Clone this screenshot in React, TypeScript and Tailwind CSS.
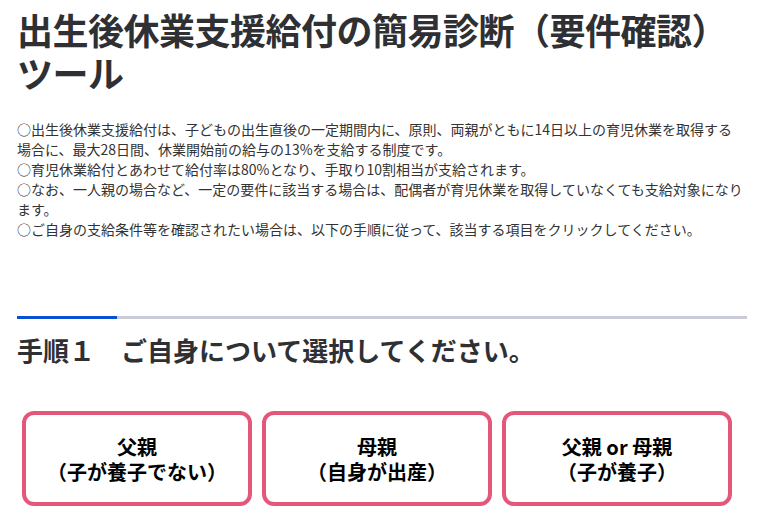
import React from 'react'

const options = [
  { line1: '父親', line2: '（子が養子でない）' },
  { line1: '母親', line2: '（自身が出産）' },
  { line1: '父親 or 母親', line2: '（子が養子）' },
]

export default function App() {
  return (
    <div className="min-h-[530px] bg-white px-[17px] pt-2 text-[#333] font-['Noto_Sans_CJK_JP','Noto_Sans',sans-serif]">
      <h1 className="text-[36px] font-bold leading-[1.2] tracking-[-0.5px] text-[#2f3033]">
        出生後休業支援給付の簡易診断（要件確認）ツール
      </h1>

      <p className="mt-[25px] w-[730px] text-[14px] leading-[20px] text-[#333]">
        ○出生後休業支援給付は、子どもの出生直後の一定期間内に、原則、両親がともに14日以上の育児休業を取得する
        <br />
        場合に、最大28日間、休業開始前の給与の13%を支給する制度です。
        <br />
        ○育児休業給付とあわせて給付率は80%となり、手取り10割相当が支給されます。
        <br />
        ○なお、一人親の場合など、一定の要件に該当する場合は、配偶者が育児休業を取得していなくても支給対象になります。
        <br />
        ○ご自身の支給条件等を確認されたい場合は、以下の手順に従って、該当する項目をクリックしてください。
      </p>

      {/* step progress */}
      <div className="mt-[77px] flex h-[3px] w-[730px] bg-[#c9ccd6]">
        <div className="h-full w-[100px] bg-[#0b4fd3]" />
      </div>

      <h2 className="mt-[11px] text-[26px] font-bold leading-[39px] text-[#2f3033]">
        手順１　ご自身について選択してください。
      </h2>

      <div className="mt-[42px] flex gap-[10px] pl-[5px]">
        {options.map((o, i) => (
          <button
            key={i}
            className="flex h-[95px] w-[230px] items-center justify-center rounded-[12px] border-4 border-[#e2577a] bg-white text-center text-[20px] font-bold leading-[25px] text-black"
          >
            <span>
              {o.line1}
              <br />
              {o.line2}
            </span>
          </button>
        ))}
      </div>
    </div>
  )
}
